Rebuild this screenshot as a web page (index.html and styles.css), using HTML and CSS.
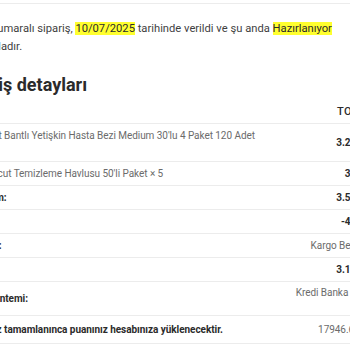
FILE: index.html
```html
<!DOCTYPE html>
<html lang="tr">

<head>
    <meta charset="UTF-8" />
    <meta name="viewport" content="width=device-width, initial-scale=1.0" />
    <title>Sipariş detayları</title>
    <link rel="stylesheet" href="styles.css">
</head>

<body>
    <div class="topbar"></div>

    <div class="order">
        <p class="order-info">
            #17948 numaralı sipariş, <mark>10/07/2025</mark> tarihinde verildi ve şu anda <mark>Hazırlanıyor</mark> durumundadır.
        </p>

        <h2>Sipariş detayları</h2>

        <table class="order-table">
            <thead>
                <tr>
                    <th class="col-name">Ürün</th>
                    <th class="col-total">Toplam</th>
                </tr>
            </thead>
            <tbody>
                <tr>
                    <td class="col-name">Dermasoft Bantlı Yetişkin Hasta Bezi Medium 30'lu 4 Paket 120 Adet <span class="qty">× 1</span></td>
                    <td class="col-total price">3.249,90 ₺</td>
                </tr>
                <tr>
                    <td class="col-name">Eviony Vücut Temizleme Havlusu 50'li Paket <span class="qty">× 5</span></td>
                    <td class="col-total price">349,50 ₺</td>
                </tr>
            </tbody>
            <tfoot>
                <tr>
                    <th>Ara toplam:</th>
                    <td class="col-total price">3.599,40 ₺</td>
                </tr>
                <tr>
                    <th>İndirim:</th>
                    <td class="col-total price">-449,92 ₺</td>
                </tr>
                <tr>
                    <th>Gönderim:</th>
                    <td class="col-total">Kargo Bedava ile</td>
                </tr>
                <tr>
                    <th>Toplam:</th>
                    <td class="col-total price">3.149,48 ₺</td>
                </tr>
                <tr class="payment">
                    <th>Ödeme yöntemi:</th>
                    <td class="col-total">Kredi Banka Kartı ile Ödeme</td>
                </tr>
                <tr class="points">
                    <th>Siparişiniz tamamlanınca puanınız hesabınıza yüklenecektir.</th>
                    <td class="col-total">17946.60 puan</td>
                </tr>
            </tfoot>
        </table>
    </div>
</body>

</html>
```

FILE: styles.css
```css
:root {
    --yazi: #3f3f3f;
    --koyu: #2b2b2b;
    --gri: #6b6b6b;
    --cizgi: #ececec;
    --sari: #ffff2e;
}

body {
    margin: 0;
    font-family: Roboto, "Noto Sans", sans-serif;
    color: var(--yazi);
    background: #ffffff;
    overflow: hidden;
}

.topbar {
    height: 3px;
    border-bottom: 1px solid var(--cizgi);
}

.order {
    margin-left: -49px;
    width: 437px;
}

.order-info {
    font-size: 11.2px;
    line-height: 17.5px;
    margin: 16px 0 0;
    margin-left: -1px;
}

mark {
    background: var(--sari);
    color: var(--koyu);
}

h2 {
    font-size: 18px;
    font-weight: 700;
    color: var(--koyu);
    margin: 19px 0 6px;
    padding-left: 5px;
}

.order-table {
    width: 100%;
    border-collapse: collapse;
    font-size: 10px;
    line-height: 14px;
    letter-spacing: -0.05px;
}

.order-table th,
.order-table td {
    padding: 5px 4px 4px;
    text-align: left;
    vertical-align: middle;
    border-top: 1px solid var(--cizgi);
}

.order-table thead th {
    border-top: none;
    text-transform: uppercase;
    font-size: 11px;
    font-weight: 500;
    color: var(--koyu);
    letter-spacing: 0.5px;
    padding: 4px;
}

.order-table .col-name {
    width: 302px;
    color: var(--gri);
}

.order-table .col-total {
    text-align: right;
    color: var(--gri);
}

.order-table thead .col-total {
    color: var(--koyu);
}

.order-table .qty {
    white-space: nowrap;
}

.order-table .price {
    font-weight: 700;
    color: var(--koyu);
}

.order-table tfoot th {
    font-weight: 700;
    color: var(--koyu);
}

.order-table .payment td {
    line-height: 12px;
}

.order-table .points th,
.order-table .points td {
    border-bottom: 1px solid var(--cizgi);
    padding: 7px 4px 6px;
}
```
